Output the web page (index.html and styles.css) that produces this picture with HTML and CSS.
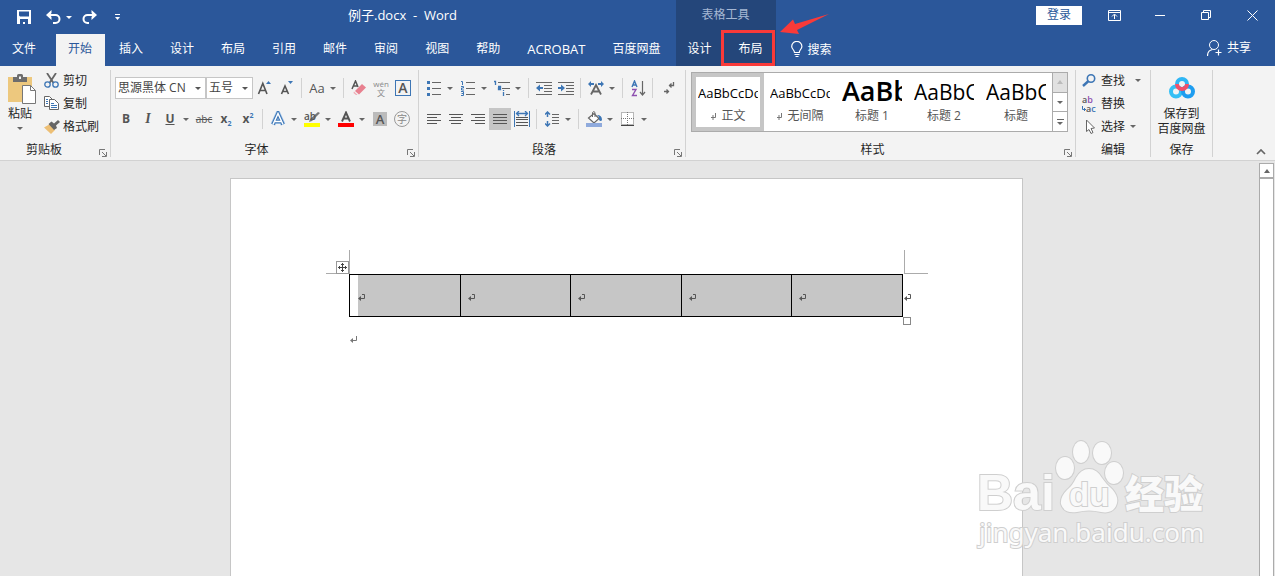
FILE: index.html
```html
<!DOCTYPE html>
<html lang="zh-CN">
<head>
<meta charset="utf-8">
<title>例子.docx - Word</title>
<link rel="stylesheet" href="styles.css">
</head>
<body>
<svg class="defs" aria-hidden="true">
  <symbol id="launch" viewBox="0 0 8 8"><path d="M.5 6V.5H6M3 3l4 4M7.500 3v4.500H3" fill="none" stroke="#777"/></symbol>
  <symbol id="cellmark" viewBox="0 0 8 8"><path d="M4 .5h2.500v4H2" fill="none" stroke="#555"/><path d="M0 4.500 3 2v5z" fill="#555"/></symbol>
  <symbol id="paramark" viewBox="0 0 8 8"><path d="M6.500 0v4.500H2" fill="none" stroke="#777"/><path d="M0 4.500 3 2v5z" fill="#777"/></symbol>
</svg>

<header class="topbar">
  <div class="top-main">
    <div class="title-row">
      <div class="quick">
        <button class="qbtn" aria-label="保存"><svg width="14" height="14"><path d="M0 0h14v14H0z" fill="#fff"/><path d="M2 1.500h10v5H3L2 5.500zM3 9h8v5H8v-2H6v2H3z" fill="#2b579a"/></svg></button>
        <button class="qbtn" aria-label="撤消"><svg width="15" height="14"><path d="M2 5h7.500a4 4 0 0 1 0 8H7" fill="none" stroke="#fff" stroke-width="2"/><path d="M0 5 5.500 0v3L4 5l1.500 2v3z" fill="#fff"/></svg></button>
        <button class="caret light" aria-label="撤消列表"></button>
        <button class="qbtn redo" aria-label="恢复"><svg width="15" height="14"><path d="M13 5H5.500a4 4 0 0 0 0 8H7" fill="none" stroke="#fff" stroke-width="2"/><path d="M15 5 9.500 0v3L11 5 9.500 7v3z" fill="#fff"/></svg></button>
        <button class="qbtn custom" aria-label="自定义"><svg width="7" height="7"><path d="M1 .5h5" stroke="#fff"/><path d="M1 3h5L3.500 6z" fill="#fff"/></svg></button>
      </div>
      <div class="doc-title">例子.docx&nbsp; -&nbsp; Word</div>
    </div>
    <nav class="tabs">
      <button class="tab file">文件</button>
      <button class="tab active">开始</button>
      <button class="tab">插入</button>
      <button class="tab">设计</button>
      <button class="tab">布局</button>
      <button class="tab">引用</button>
      <button class="tab">邮件</button>
      <button class="tab">审阅</button>
      <button class="tab">视图</button>
      <button class="tab">帮助</button>
      <button class="tab latin">ACROBAT</button>
      <button class="tab">百度网盘</button>
    </nav>
  </div>
  <div class="context">
    <div class="context-title">表格工具</div>
    <div class="tabs">
      <button class="tab">设计</button>
      <button class="tab marked">布局</button>
    </div>
    <svg class="arrow" width="50" height="22"><path d="M0 18 13 5.500 15 10 49 0 17 16l2 4z" fill="#f93a39"/></svg>
  </div>
  <div class="top-side">
    <div class="title-row end">
      <button class="login">登录</button>
      <button class="win" aria-label="功能区显示选项"><svg width="13" height="11"><path d="M.5.500h12v10H.5zM0 2.500h13M6.500 9V4.500M4 6.500 6.500 4 9 6.500" fill="none" stroke="#fff"/></svg></button>
      <button class="win" aria-label="最小化"><svg width="11" height="11"><path d="M0 5.500h10" stroke="#fff"/></svg></button>
      <button class="win" aria-label="还原"><svg width="11" height="11"><path d="M.5 2.500h7v7h-7zM2.500 2V.5h7v7H8" fill="none" stroke="#fff"/></svg></button>
      <button class="win" aria-label="关闭"><svg width="11" height="11"><path d="m.5.500 10 10m0-10-10 10" stroke="#fff"/></svg></button>
    </div>
    <div class="search-row">
      <button class="tool"><svg width="12" height="17"><path d="M3.500 11.500C3.500 9 .7 8 .7 5.500a5 5 0 0 1 10.200 0C10.900 8 8.300 9 8.300 11.500zM3.500 13.500h5M4.500 15.500h3" fill="none" stroke="#fff" stroke-width="1.200"/></svg>搜索</button>
      <button class="tool share"><svg width="15" height="16"><circle cx="7" cy="5" r="4.500" fill="none" stroke="#fff"/><path d="M.5 16c0-4 2-6 5-6.500M8.500 12.500h6M11.500 9.500v6" fill="none" stroke="#fff" stroke-width="1.200"/></svg>共享</button>
    </div>
  </div>
</header>

<section class="ribbon">
  <div class="group g-clip">
    <div class="body clip">
      <button class="paste">
        <svg width="30" height="31"><path d="M1 3h24v25H1z" fill="#edc87e"/><path d="M6 8V3h4V1.500Q10 0 11.500 0h3Q16 0 16 1.500V3h4v5z" fill="#6d6d6d"/><path d="M12 2.500h2V5h-2z" fill="#f3f3f3"/><path d="M15.500 11.500h8l5 5v13h-13z" fill="#fff" stroke="#777"/><path d="M23.500 11.500v5h5" fill="none" stroke="#777"/></svg>
        <span>粘贴</span><i class="tri"></i>
      </button>
      <div class="rows">
        <button class="item"><svg width="15" height="16"><path d="M3 0l6.500 10M12 0 5.500 10" stroke="#666" stroke-width="1.800"/><circle cx="3.500" cy="11.500" r="2.700" fill="none" stroke="#3d76b5" stroke-width="1.300"/><circle cx="11.500" cy="11.500" r="2.700" fill="none" stroke="#3d76b5" stroke-width="1.300"/></svg>剪切</button>
        <button class="item"><svg width="15" height="15"><path d="M.5.500h5l3 3v7h-8z" fill="#fff" stroke="#666"/><path d="M5.500 3.500h5l4 4v6h-9z" fill="#fff" stroke="#666"/><path d="M2 3.500h2M2 5.500h2M2 7.500h2M7 7.500h3M7 9.500h6M7 11.500h6" stroke="#3d76b5"/></svg>复制</button>
        <button class="item"><svg width="16" height="14"><path d="M0 7.500 6 4l5 6-4 4z" fill="#edbf75"/><path d="m4.500 4 3-2.500 2.500 2L14 0l2 2-4 3.500L13 8l-3 2z" fill="#666"/></svg>格式刷</button>
      </div>
    </div>
    <div class="foot"><span>剪贴板</span><button class="launcher" aria-label="剪贴板设置"><svg width="8" height="8"><use href="#launch"/></svg></button></div>
  </div>

  <div class="group g-font">
    <div class="body two">
      <div class="line">
        <span class="combo c-font"><select aria-label="字体"><option>思源黑体 CN</option></select></span>
        <span class="combo c-size"><select aria-label="字号"><option>五号</option></select></span>
        <button class="ib" aria-label="增大字号"><svg width="16" height="16"><path d="M1.500 14 5.800 3.500 10 14M3 10.500h5.500" fill="none" stroke="#555" stroke-width="1.600"/><path d="M9 4h5l-2.500-3z" fill="#3d76b5"/></svg></button>
        <button class="ib" aria-label="减小字号"><svg width="16" height="16"><path d="M2.500 14 6 6l3.500 8M4 11.500h4" fill="none" stroke="#555" stroke-width="1.600"/><path d="M9 1h5l-2.500 3z" fill="#3d76b5"/></svg></button>
        <i class="sep"></i>
        <button class="ib aa">Aa</button><button class="caret" aria-label="更改大小写"></button>
        <i class="sep"></i>
        <button class="ib" aria-label="清除格式"><svg width="16" height="16"><path d="M1 9 4.500 1 7 7M2.500 6h4" fill="none" stroke="#555" stroke-width="1.500"/><path d="m4 11 7-7 4 3.500-7 7z" fill="#e8808f"/><path d="m3 11.500 3.500 3.500H5l-2.500-2z" fill="#f0a9b3"/></svg></button>
        <button class="ib pinyin"><span>wén</span><span>文</span></button>
        <button class="ib"><span class="boxed">A</span></button>
      </div>
      <div class="line">
        <button class="ib b">B</button><button class="ib i">I</button><button class="ib u">U</button><button class="caret" aria-label="下划线"></button>
        <button class="ib strike">abc</button><button class="ib b">x<sub>2</sub></button><button class="ib b">x<sup>2</sup></button>
        <i class="sep"></i>
        <button class="ib" aria-label="文本效果"><svg width="16" height="16"><path d="M3 13.500 8 2.500l5 11M5 10.500h6" fill="none" stroke="#a9c8ea" stroke-width="5"/><path d="M3 13.500 8 2.500l5 11M5 10.500h6" fill="none" stroke="#3d76b5" stroke-width="3.600"/><path d="M3 13.500 8 2.500l5 11M5 10.500h6" fill="none" stroke="#fff" stroke-width="1.500"/></svg></button><button class="caret" aria-label="文本效果选项"></button>
        <button class="ib hl"><span>ab</span><svg width="16" height="16"><path d="m14 1 2 1-8 8-3 1 1-3z" fill="#777"/><path d="M0 12h16v4H0z" fill="#ff0"/></svg></button><button class="caret" aria-label="突出显示颜色"></button>
        <button class="ib" aria-label="字体颜色"><svg width="16" height="16"><path d="M4 10.500 8 1.500l4 9M5.500 7.500h5" fill="none" stroke="#555" stroke-width="1.900"/><path d="M0 12h16v4H0z" fill="red"/></svg></button><button class="caret" aria-label="字体颜色选项"></button>
        <button class="ib"><span class="shade">A</span></button>
        <button class="ib"><span class="ring">字</span></button>
      </div>
    </div>
    <div class="foot"><span>字体</span><button class="launcher" aria-label="字体设置"><svg width="8" height="8"><use href="#launch"/></svg></button></div>
  </div>

  <div class="group g-para">
    <div class="body two">
      <div class="line">
        <button class="ib" aria-label="项目符号"><svg width="14" height="16"><path d="M0 1h3v3H0zM0 7h3v3H0zM0 13h3v3H0z" fill="#3d76b5"/><path d="M5 2.500h9M5 8.500h9M5 14.500h9" stroke="#666"/></svg></button><button class="caret" aria-label="项目符号库"></button>
        <button class="ib" aria-label="编号"><svg width="14" height="16"><path d="M0 1.500h1.500V5M0 6.500h2.500V8H.5v2H3M0 11.500h2.500v4H0M.5 13.500h2" fill="none" stroke="#3d76b5"/><path d="M5 2.500h9M5 8.500h9M5 14.500h9" stroke="#666"/></svg></button><button class="caret" aria-label="编号库"></button>
        <button class="ib" aria-label="多级列表"><svg width="16" height="16"><path d="M0 1.500h1.500V5M4 6.500h2.500v3H4.500v-1.500H6M9.500 10v1M9.500 12v4" fill="none" stroke="#3d76b5" stroke-width="1.300"/><path d="M4 2.500h12M8 8.500h8M12 14.500h4" stroke="#666"/></svg></button><button class="caret" aria-label="多级列表库"></button>
        <i class="sep"></i>
        <button class="ib" aria-label="减少缩进"><svg width="16" height="14"><path d="M0 1.500h16M8 4.500h8M8 7.500h8M8 10.500h8M0 13.500h16" stroke="#666"/><path d="M7 6v2H4v2.500L0 7l4-3.500V6z" fill="#3d76b5"/></svg></button>
        <button class="ib" aria-label="增加缩进"><svg width="16" height="14"><path d="M0 1.500h16M8 4.500h8M8 7.500h8M8 10.500h8M0 13.500h16" stroke="#666"/><path d="M0 6v2h3v2.500L7 7 3 3.500V6z" fill="#3d76b5"/></svg></button>
        <i class="sep"></i>
        <button class="ib" aria-label="中文版式"><svg width="16" height="14"><path d="M3 13.500 8 4l5 9.500M5 10.500h6" fill="none" stroke="#666" stroke-width="1.800"/><path d="M0 3l3-3v2h3v2H3v2zM16 3l-3-3v2h-3v2h3v2z" fill="#3d76b5"/></svg></button><button class="caret" aria-label="中文版式选项"></button>
        <i class="sep"></i>
        <button class="ib" aria-label="排序"><svg width="15" height="17"><path d="M1 7 3.500 1 6 7M2 5h3" fill="none" stroke="#3d76b5" stroke-width="1.400"/><path d="M1 9.500h4L1.500 15.500H6" fill="none" stroke="#8e4fb0" stroke-width="1.400"/><path d="M11.500 1v14M9 12l2.500 3L14 12" fill="none" stroke="#666" stroke-width="1.200"/></svg></button>
        <i class="sep"></i>
        <button class="ib mark" aria-label="显示编辑标记"><svg width="12" height="14"><path d="M9.500 1v3.500H5M7.500 2.500l-2 2 2 2M0 10.500h4M2.500 8.500l2 2-2 2" fill="none" stroke="#666" stroke-width="1.300"/></svg></button>
      </div>
      <div class="line">
        <button class="ib" aria-label="左对齐"><svg width="14" height="12"><path d="M0 1.500h14M0 4.500h10M0 7.500h14M0 10.500h10" stroke="#555"/></svg></button>
        <button class="ib" aria-label="居中"><svg width="14" height="12"><path d="M0 1.500h14M2 4.500h10M0 7.500h14M2 10.500h10" stroke="#555"/></svg></button>
        <button class="ib" aria-label="右对齐"><svg width="14" height="12"><path d="M0 1.500h14M4 4.500h10M0 7.500h14M4 10.500h10" stroke="#555"/></svg></button>
        <button class="ib on" aria-label="两端对齐"><svg width="14" height="12"><path d="M0 1.500h14M0 4.500h14M0 7.500h14M0 10.500h14" stroke="#555"/></svg></button>
        <button class="ib" aria-label="分散对齐"><svg width="16" height="16"><path d="M.5 0v16M15.500 0v16" stroke="#3d76b5"/><path d="M2 2.500h12M5 0 2.500 2.500 5 5M11 0l2.500 2.500L11 5" fill="none" stroke="#3d76b5" stroke-width="1.300"/><path d="M2 6.500h12M2 8.500h12M2 11.500h12M2 14.500h12" stroke="#555"/></svg></button>
        <i class="sep"></i>
        <button class="ib" aria-label="行距"><svg width="14" height="16"><path d="M2.500 1v5M2.500 10v5M0 3.500 2.500 1 5 3.500M0 12.500 2.500 15 5 12.500" fill="none" stroke="#3d76b5" stroke-width="1.500"/><path d="M7 3.500h7M7 6.500h7M7 9.500h7M7 12.500h7" stroke="#666"/></svg></button><button class="caret" aria-label="行距选项"></button>
        <i class="sep"></i>
        <button class="ib" aria-label="底纹"><svg width="16" height="16"><path d="m2.500 7 5.500-4.500 5 5L8 12z" fill="#fff" stroke="#666" stroke-width="1.200"/><path d="M6.500 6V1.500Q8-.5 9 1.500V6" fill="none" stroke="#666"/><path d="M11 4q5 0 5 5-1 2-3 0V6z" fill="#3d76b5"/><path d="M0 12h16v4H0z" fill="#8faadc"/></svg></button><button class="caret" aria-label="底纹选项"></button>
        <button class="ib" aria-label="边框"><svg width="14" height="14"><path d="M.5.500h12v12H.5zM6.500 0v13M0 6.500h13" fill="#fff" stroke="#777" stroke-dasharray="1 1"/><path d="M0 13.500h13" stroke="#444"/></svg></button><button class="caret" aria-label="边框选项"></button>
      </div>
    </div>
    <div class="foot"><span>段落</span><button class="launcher" aria-label="段落设置"><svg width="8" height="8"><use href="#launch"/></svg></button></div>
  </div>

  <div class="group g-style">
    <div class="body">
      <div class="gallery">
        <button class="style picked"><span class="sample">AaBbCcDd</span><span class="sname"><svg width="6" height="7"><path d="M5.500 0v4.500H1M3 2v5" fill="none" stroke="#777"/></svg>正文</span></button>
        <button class="style"><span class="sample">AaBbCcDd</span><span class="sname"><svg width="6" height="7"><path d="M5.500 0v4.500H1M3 2v5" fill="none" stroke="#777"/></svg>无间隔</span></button>
        <button class="style"><span class="sample h1">AaBb</span><span class="sname">标题 1</span></button>
        <button class="style"><span class="sample h2">AaBbC</span><span class="sname">标题 2</span></button>
        <button class="style"><span class="sample h2">AaBbC</span><span class="sname">标题</span></button>
        <div class="gscroll">
          <button class="off" aria-label="上一行"><i class="tri up"></i></button>
          <button aria-label="下一行"><i class="tri"></i></button>
          <button class="more" aria-label="其他"><i class="tri"></i></button>
        </div>
      </div>
    </div>
    <div class="foot"><span>样式</span><button class="launcher" aria-label="样式设置"><svg width="8" height="8"><use href="#launch"/></svg></button></div>
  </div>

  <div class="group g-edit">
    <div class="body rows">
      <button class="item"><svg width="15" height="13"><circle cx="9" cy="4.500" r="3.700" fill="none" stroke="#3d76b5" stroke-width="1.600"/><path d="M6.500 7 1 12" stroke="#3d76b5" stroke-width="2.400"/></svg>查找<i class="tri far"></i></button>
      <button class="item"><span class="abac"><span>a<b>b</b></span><span><svg width="4" height="5"><path d="M.5 0v3.500H4M2.500 2v3" fill="none" stroke="#3d76b5"/></svg>a<em>c</em></span></span>替换</button>
      <button class="item"><svg width="15" height="16"><path d="M4.500 1v11.500L7 10.500l2 4 2-1-2-4 3.500-.5z" fill="#fff" stroke="#666"/></svg>选择<i class="tri"></i></button>
    </div>
    <div class="foot"><span>编辑</span></div>
  </div>

  <div class="group g-save">
    <div class="body">
      <button class="pan">
        <svg width="28" height="22"><g fill="none" stroke-width="4"><circle cx="8" cy="14.500" r="5" stroke="#35c0f5"/><circle cx="20" cy="14.500" r="5" stroke="#1e9df0"/><path d="M9 7a5 5 0 0 1 10 0" stroke="#2fb6f5"/><path d="M9 7a5 5 0 0 0 10 0" stroke="#f2506a"/></g></svg>
        <span>保存到</span><span>百度网盘</span>
      </button>
    </div>
    <div class="foot"><span>保存</span></div>
  </div>
  <button class="collapse" aria-label="折叠功能区"><svg width="10" height="6"><path d="m1 5 4-4 4 4" fill="none" stroke="#666" stroke-width="1.700"/></svg></button>
</section>

<main class="work">
  <div class="canvas">
    <article class="page">
      <div class="block">
        <i class="corner left"></i><i class="corner right"></i>
        <button class="move" aria-label="移动表格"><svg width="11" height="11"><path d="M5.500 1v9M1 5.500h9M4 2.500h3M4 8.500h3M2.500 4v3M8.500 4v3" stroke="#444"/></svg></button>
        <table class="grid">
          <tr>
            <td><svg width="8" height="8"><use href="#cellmark"/></svg></td>
            <td><svg width="8" height="8"><use href="#cellmark"/></svg></td>
            <td><svg width="8" height="8"><use href="#cellmark"/></svg></td>
            <td><svg width="8" height="8"><use href="#cellmark"/></svg></td>
            <td><svg width="8" height="8"><use href="#cellmark"/></svg></td>
          </tr>
        </table>
        <svg class="rowend" width="8" height="8"><use href="#cellmark"/></svg>
        <i class="resize"></i>
      </div>
      <p class="para"><svg width="8" height="8"><use href="#paramark"/></svg></p>
    </article>
  </div>
  <div class="vscroll"><button aria-label="向上滚动"><i class="tri up"></i></button><div class="thumb"></div></div>
  <svg class="watermark" width="250" height="120">
    <g class="wm">
      <text class="wm-bai" x="7" y="75">Bai</text>
      <ellipse cx="95" cy="33" rx="9" ry="11"/><ellipse cx="111" cy="17" rx="8" ry="11"/><ellipse cx="132" cy="18" rx="9" ry="11"/><ellipse cx="144" cy="38" rx="9" ry="11"/>
      <path d="M119 34q8 0 13 9 4 6 10 11 8 9 4 17-4 8-15 6-12-3-24 0-13 2-16-8-1-7 6-14 6-5 9-12 5-9 13-9z"/>
      <text class="wm-du" x="99" y="71">du</text>
      <text class="wm-cn" x="155" y="73">经验</text>
      <text class="wm-url" x="9" y="107">jingyan.baidu.com</text>
    </g>
  </svg>
</main>
</body>
</html>
```
FILE: styles.css
```css
*, *::before, *::after { box-sizing: border-box; }
html, body { height: 100%; }
body {
  margin: 0;
  display: flex;
  flex-direction: column;
  overflow: hidden;
  background: #e6e6e6;
  color: #262626;
  font: 12px/14px "Open Sans", "Noto Sans CJK SC", sans-serif;
}
button, select {
  margin: 0; padding: 0; border: 0;
  background: none; color: inherit; font: inherit;
  appearance: none;
}
svg { display: block; flex: none; }
.defs { position: absolute; width: 0; height: 0; }

/* title bar and tabs */
.topbar { display: flex; height: 66px; background: #2b579a; color: #fff; }
.top-main { padding-right: 2px; }
.title-row { display: flex; align-items: center; height: 30px; }
.quick { display: flex; align-items: center; width: 348px; padding: 4px 0 0 17px; }
.qbtn { margin-right: 15px; }
.quick .caret { margin-left: -12px; }
.redo { margin: 0 17px 0 6px; }
.doc-title { font-size: 13px; }
.tabs { display: flex; gap: 2px; height: 32px; }
.title-row + .tabs { margin-top: 4px; }
.tab { position: relative; padding: 0 13px 2px 12px; white-space: nowrap; }
.tab.file { padding-right: 18px; }
.tab.latin { font-size: 13px; }
.tab.active { background: #f3f3f3; color: #2b579a; }
.context { position: relative; background: #24467a; }
.context-title { height: 34px; padding-top: 8px; text-align: center; color: #a6b8d4; }
.marked::after {
  content: ""; position: absolute; inset: -4px 1px 0 -6px;
  border: 3px solid #f93a39;
}
.arrow { position: absolute; left: 104px; top: 14px; }
.top-side { flex: 1; }
.end { justify-content: flex-end; }
.login { width: 46px; height: 19px; margin-right: 9px; background: #fff; color: #2b579a; }
.win { display: flex; justify-content: center; align-items: center; width: 46px; height: 30px; }
.search-row { display: flex; justify-content: space-between; height: 36px; padding: 3px 24px 0 15px; }
.tool { display: flex; align-items: center; gap: 5px; }
.share { padding-bottom: 3px; }

/* ribbon */
.ribbon {
  position: relative; display: flex; flex: none;
  padding: 4px 0 3px; border-bottom: 1px solid #d2d2d2; background: #f3f3f3;
}
.group { display: flex; flex-direction: column; flex: none; border-right: 1px solid #d2d2d2; }
.g-clip { width: 111px; }
.g-font { width: 308px; }
.g-para { width: 267px; }
.g-style { width: 390px; }
.g-edit { width: 75px; }
.g-save { width: 62px; }
.body { height: 73px; }
.foot { display: flex; height: 14px; text-align: center; }
.foot span { flex: 1; }
.g-clip .foot span { padding-right: 6px; }
.launcher { width: 16px; padding: 5px 0 0 5px; }

.tri { flex: none; border: 3px solid transparent; border-top-color: #666; border-bottom: 0; }
.tri.up { border-bottom: 4px solid #666; border-top: 0; }
.caret { width: 12px; height: 22px; padding-left: 2px; }
.caret::before { content: ""; display: block; width: 6px; border: 3px solid transparent; border-top-color: #666; border-bottom: 0; }
.caret.light::before { border-top-color: #fff; }

.clip { display: flex; gap: 8px; padding-left: 4px; }
.paste { display: flex; flex-direction: column; align-items: center; width: 32px; padding-top: 4px; }
.paste svg { margin-left: 4px; }
.paste span { margin-top: 2px; }
.paste .tri { margin-top: 6px; }
.rows { display: flex; flex-direction: column; gap: 2px; }
.item { display: flex; align-items: center; height: 21px; white-space: nowrap; }
.item > svg { width: 16px; margin-right: 3px; }

.two { display: flex; flex-direction: column; gap: 9px; padding: 7px 0 0 4px; }
.line { display: flex; align-items: center; height: 22px; }
.ib { display: flex; justify-content: center; align-items: center; width: 22px; height: 22px; flex: none; color: #555; }
.on { background: #c6c6c6; }
.mark { margin-left: 2px; }
.sep { width: 8px; height: 20px; flex: none; background: linear-gradient(#d2d2d2, #d2d2d2) 3px 0 / 1px 100% no-repeat; }
.combo { position: relative; height: 22px; border: 1px solid #c6c6c6; background: #fff; }
.combo::after { content: ""; position: absolute; right: 4px; top: 9px; border: 3px solid transparent; border-top-color: #555; border-bottom: 0; }
.combo select { width: 100%; height: 20px; padding-left: 2px; color: #444; }
.c-font { width: 91px; }
.c-size { width: 47px; margin-right: 1px; }
.aa { font-size: 13px; }
.pinyin { flex-direction: column; font-size: 8px; line-height: 9px; color: #888; }
.boxed { width: 16px; border: 1px solid #3d76b5; font-size: 14px; font-weight: 600; }
.b { font-weight: 700; }
.b sub, .b sup { font-size: 7px; line-height: 7px; color: #3d76b5; }
.b sub { align-self: flex-end; margin-bottom: 3px; }
.b sup { align-self: flex-start; margin-top: 4px; }
.i { font-family: "Liberation Serif", serif; font-size: 14px; font-style: italic; font-weight: 700; }
.u { font-weight: 700; text-decoration: underline; }
.strike { font-size: 10px; text-decoration: line-through; }
.hl { position: relative; }
.hl span { position: absolute; left: 3px; top: 1px; font-size: 10px; font-weight: 600; }
.shade { width: 14px; background: #bbb; font-size: 13px; font-weight: 600; }
.ring { width: 16px; height: 16px; border: 1px solid #999; border-radius: 50%; font-size: 10px; color: #888; }

.gallery { display: flex; height: 60px; margin: 2px 7px 0 5px; border: 1px solid #ababab; background: #fff; }
.style { display: flex; flex-direction: column; justify-content: flex-start; width: 72px; padding: 0 6px; }
.style.picked { box-shadow: inset 0 0 0 4px #c6c6c6; }
.sample { overflow: hidden; height: 35px; width: 60px; font-size: 13px; line-height: 40px; color: #000; text-align: left; white-space: nowrap; }
.sample.h1 { font-size: 27px; font-weight: 600; line-height: 36px; }
.sample.h2 { font-size: 21px; line-height: 39px; }
.sname { display: flex; justify-content: center; align-items: center; gap: 5px; width: 60px; height: 16px; color: #555; }
.gscroll { display: flex; flex-direction: column; flex: 1; border-left: 1px solid #ababab; }
.gscroll button { display: flex; justify-content: center; align-items: center; flex: 1; border-bottom: 1px solid #ababab; }
.gscroll .more { flex-direction: column; border-bottom: 0; }
.more::before { content: ""; width: 7px; height: 1px; margin-bottom: 2px; background: #666; }
.gscroll .off { background: #e1e1e1; }
.off .tri.up { border-bottom-color: #bbb; }

.g-edit .rows { padding-left: 6px; }
.item .tri { margin-left: 5px; }
.item .far { margin-left: 10px; }
.abac { display: flex; flex-direction: column; width: 16px; margin-right: 3px; font-size: 9px; line-height: 9px; font-weight: 600; color: #555; }
.abac > span { display: flex; align-items: center; }
.abac b { font-weight: 600; color: #8e4fb0; }
.abac em { font-style: normal; color: #3d76b5; }
.pan { display: flex; flex-direction: column; align-items: center; width: 100%; padding-top: 7px; line-height: 15px; white-space: nowrap; }
.pan svg { margin-bottom: 7px; }
.collapse { position: absolute; right: 9px; bottom: 5px; }

/* document */
.work { position: relative; display: flex; flex: 1; min-height: 0; }
.canvas { display: flex; justify-content: center; flex: 1; padding: 17px 6px 0 0; }
.page { width: 793px; padding: 95px 119px 0 118px; border: 1px solid #c6c6c6; border-bottom: 0; background: #fff; }
.block { position: relative; }
.grid { width: 554px; border-collapse: collapse; table-layout: fixed; background: #c6c6c6; }
.grid td { height: 42px; padding: 5px 0 0 7px; border: 1px solid #000; }
.grid td:first-child { background: linear-gradient(#fff, #fff) 0 0 / 8px 100% no-repeat; padding-left: 8px; }
.corner { position: absolute; top: -24px; width: 24px; height: 24px; border-bottom: 1px solid #ababab; }
.corner.left { left: -23px; border-right: 1px solid #ababab; }
.corner.right { left: 555px; border-left: 1px solid #ababab; }
.move { position: absolute; left: -13px; top: -13px; border: 1px solid #999; background: #fff; }
.rowend { position: absolute; left: 555px; top: 20px; }
.resize { position: absolute; left: 554px; top: 43px; width: 8px; height: 8px; border: 1px solid #888; background: #fff; }
.para { margin: 19px 0 0 1px; }
.vscroll { display: flex; flex-direction: column; width: 16px; padding: 2px 1px 0 0; }
.vscroll button { display: flex; justify-content: center; align-items: center; height: 15px; border: 1px solid #ababab; background: #fff; }
.thumb { flex: 1; border: 1px solid #ababab; border-bottom: 0; background: #fff; }

.watermark { position: absolute; right: 55px; bottom: 21px; }
.wm { fill: #f9f9f9; stroke: #cfcfcf; stroke-width: 2px; paint-order: stroke; }
.wm-bai { font: 700 50px "Liberation Sans", sans-serif; }
.wm-du { font: 700 33px "Liberation Sans", sans-serif; }
.wm-cn { font: 900 39px "Noto Sans CJK SC", sans-serif; }
.wm-url { font: 26px "Noto Sans", sans-serif; }
```
